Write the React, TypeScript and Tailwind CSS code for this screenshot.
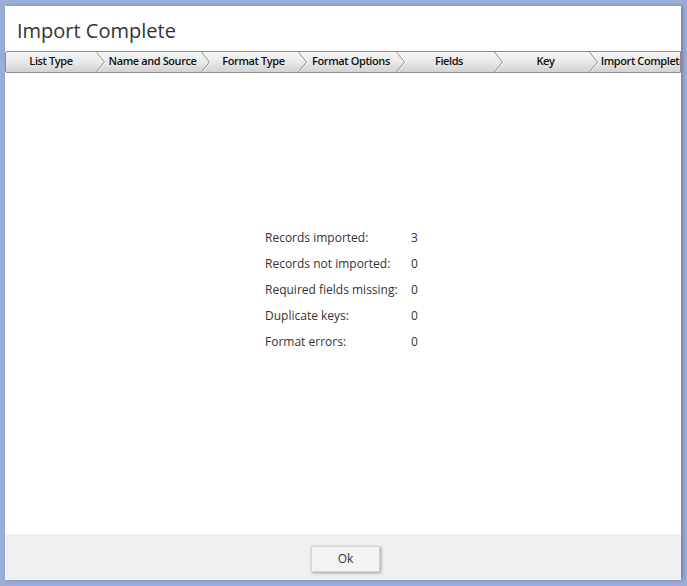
import React from 'react';

const steps = [
  { label: 'List Type', width: 90 },
  { label: 'Name and Source', width: 105 },
  { label: 'Format Type', width: 97 },
  { label: 'Format Options', width: 98 },
  { label: 'Fields', width: 98 },
  { label: 'Key', width: 95 },
  { label: 'Import Complete', width: 100 },
];

const stats = [
  { label: 'Records imported:', value: 3 },
  { label: 'Records not imported:', value: 0 },
  { label: 'Required fields missing:', value: 0 },
  { label: 'Duplicate keys:', value: 0 },
  { label: 'Format errors:', value: 0 },
];

function Chevron() {
  return (
    <svg width="10" height="20" viewBox="0 0 10 20" className="absolute left-0 top-0">
      <polyline points="0.5,0 8.5,10 0.5,20" fill="none" stroke="#ffffff" strokeWidth="1" transform="translate(1,0)" />
      <polyline points="0.5,0 8.5,10 0.5,20" fill="none" stroke="#8f8f8f" strokeWidth="1" />
    </svg>
  );
}

export default function App() {
  return (
    <div className="h-[586px] w-[687px] overflow-hidden bg-[#9aacd7] pl-[5px] pr-[6px] pt-[6px] pb-[6px]" style={{ fontFamily: '"Open Sans", "Noto Sans", sans-serif' }}>
      <div className="flex h-full flex-col bg-white shadow-[2px_0_3px_rgba(60,80,140,0.45)]">
        {/* Title */}
        <div className="h-[45px] pl-[12px] pt-[12px]">
          <h1 className="text-[20px] leading-[26px] text-[#333]">Import Complete</h1>
        </div>

        {/* Steps */}
        <div className="flex h-[22px] overflow-hidden rounded-l-[2px] border border-[#8c8c8c] bg-gradient-to-b from-[#f7f7f7] via-[#e9e9e9] to-[#d2d2d2]">
          {steps.map((s, i) => (
            <div
              key={s.label}
              className="relative flex shrink-0 items-center justify-center pb-[2px]"
              style={{ width: s.width, paddingLeft: i === 0 ? 0 : 8 }}
            >
              {i > 0 && <Chevron />}
              <span className="whitespace-nowrap text-[11px] leading-[14px] font-semibold tracking-[-0.4px] text-[#111]">{s.label}</span>
            </div>
          ))}
        </div>

        {/* Results */}
        <div className="flex-1 pl-[260px] pt-[152px]">
          {stats.map((r) => (
            <div key={r.label} className="flex h-[26px] items-center text-[12px] text-[#333]">
              <span className="w-[146px]">{r.label}</span>
              <span>{r.value}</span>
            </div>
          ))}
        </div>

        {/* Footer */}
        <div className="h-[46px] bg-[#f0f0f0] pt-[11px]">
          <button className="ml-[306px] h-[26px] w-[69px] border border-[#d4d4d4] bg-[#f3f3f3] text-[12px] text-[#333] shadow-[1px_1px_3px_rgba(0,0,0,0.35)]">
            Ok
          </button>
        </div>
      </div>
    </div>
  );
}
